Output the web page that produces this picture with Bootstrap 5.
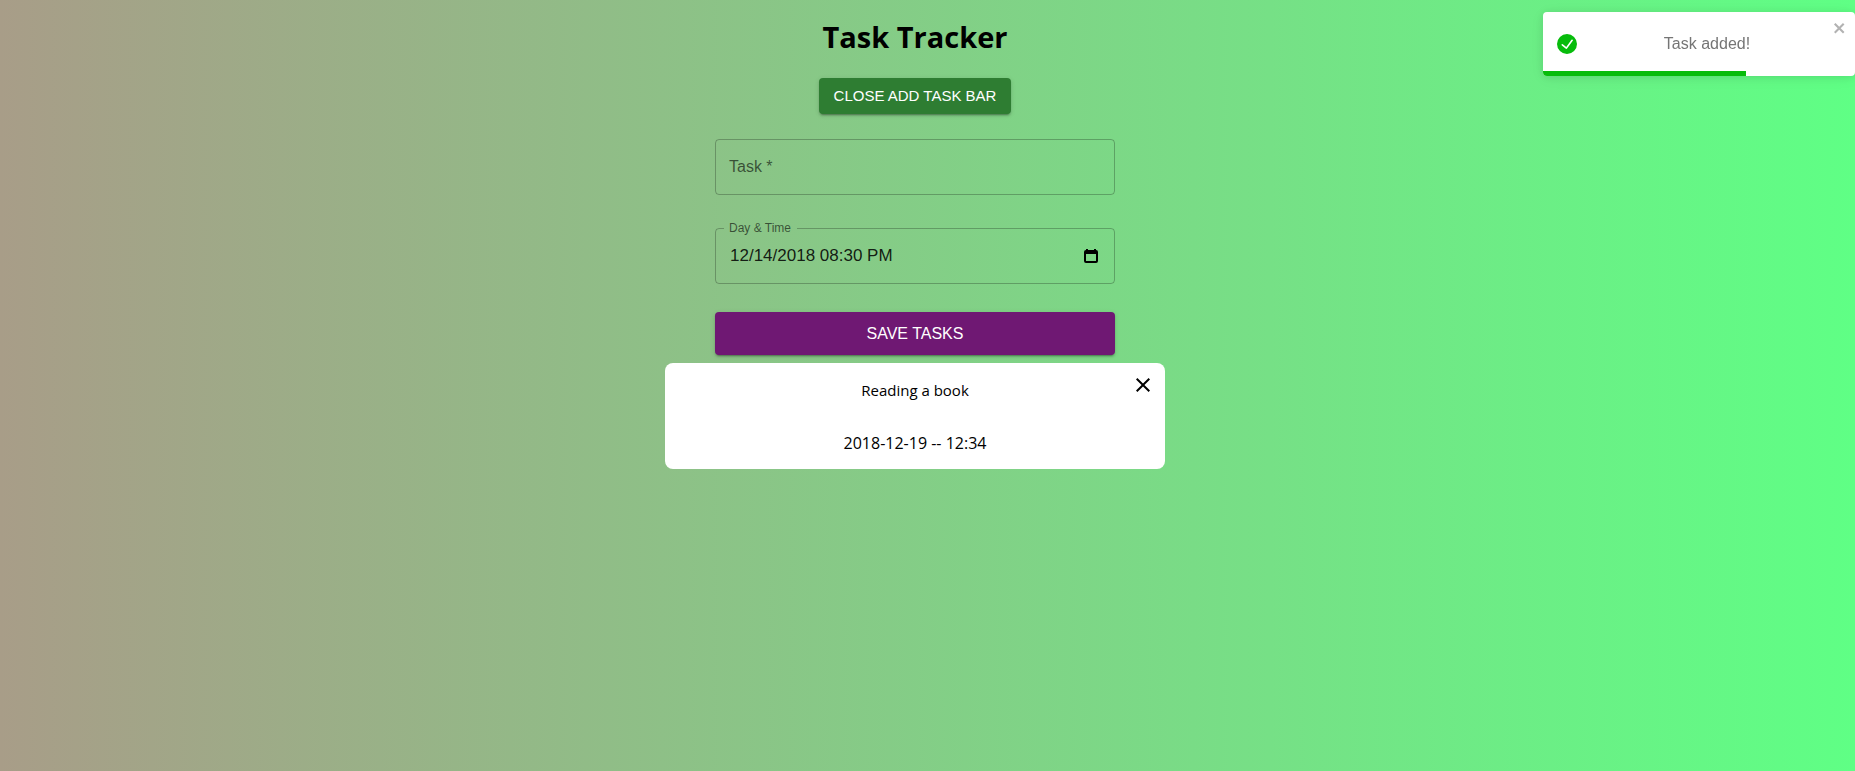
<!DOCTYPE html>
<html lang="en">
<head>
<meta charset="utf-8">
<meta name="viewport" content="width=device-width, initial-scale=1">
<title>Task Tracker</title>
<link href="https://cdn.jsdelivr.net/npm/bootstrap@5.3.0/dist/css/bootstrap.min.css" rel="stylesheet">
<style>
  body {
    min-height: 100vh;
    padding-right: 25px;
    font-family: "Open Sans", "Noto Sans", sans-serif;
    color: #000;
    background: linear-gradient(to right, #a89d88, #5fff85);
  }
  .tracker { max-width: 500px; }
  .tracker-title { font-size: 29px; line-height: 42px; margin: 16px 0 20px; }
  .task-form { max-width: 400px; margin-top: 25px; }

  /* raised, upper-case buttons */
  .btn-raised {
    --bs-btn-color: #fff;
    --bs-btn-hover-color: #fff;
    --bs-btn-active-color: #fff;
    font-family: "Liberation Sans", Arial, sans-serif;
    border: 0;
    border-radius: 4px;
    text-transform: uppercase;
    box-shadow: 0 3px 1px -2px rgba(0,0,0,.2), 0 2px 2px 0 rgba(0,0,0,.14), 0 1px 5px 0 rgba(0,0,0,.12);
  }
  .btn-toggle-form {
    --bs-btn-bg: #2e7d32;
    --bs-btn-hover-bg: #1b5e20;
    --bs-btn-active-bg: #1b5e20;
    height: 36px;
    padding: 0 15px;
    font-size: 15px;
  }
  .btn-save {
    --bs-btn-bg: #6f1873;
    --bs-btn-hover-bg: #581060;
    --bs-btn-active-bg: #581060;
    height: 43px;
    font-size: 16px;
    margin-top: 28px;
  }

  /* outlined fields */
  .field, .toast-note { font-family: "Liberation Sans", Arial, sans-serif; }
  .field-outline { border: 1px solid rgba(0,0,0,.25); border-radius: 4px; }
  .field-input {
    height: 54px;
    padding: 0 14px;
    border: 0;
    border-radius: 4px;
    font-size: 16px;
    line-height: 24px;
    color: rgba(0,0,0,.87);
  }
  .field-input, .field-input:focus { background: transparent; }
  .field-label { color: rgba(0,0,0,.6); line-height: 54px; padding: 0 13px; pointer-events: none; }
  .field-input:focus + .field-label, .field-input:valid + .field-label { display: none; }
  .field-notched { margin-top: 27px; }
  .field-row { height: 49px; padding: 0 15px 5px 14px; }
  .field-row .field-input { height: 24px; padding: 0; font-size: 17px; min-width: 0; }
  .field-notched legend {
    float: none;
    width: auto;
    margin: 0 0 0 8px;
    padding: 0 6px 0 5px;
    font-size: 12px;
    line-height: 12px;
    color: rgba(0,0,0,.6);
  }

  .task-item { min-height: 106px; margin-top: 8px; border-radius: 8px; padding: 15px 0 14px; }
  .task-item p { line-height: 24px; }
  .task-name { font-size: 15px; }
  .icon-button { line-height: 0; background: none; border: 0; padding: 0; color: #000; }
  .task-item .icon-button { top: 10px; right: 10px; }

  .toast-note {
    top: 12px;
    width: 312px;
    height: 64px;
    padding: 0 14px;
    border-radius: 4px;
    color: #757575;
    box-shadow: 0 1px 10px 0 rgba(0,0,0,.1), 0 2px 15px 0 rgba(0,0,0,.05);
  }
  .toast-note .icon-button { top: 8px; right: 8px; color: #b2b2b2; }
  .toast-text { padding: 0 12px 0 8px; }
  .toast-bar { height: 5px; background: #07bc0c; }
</style>
</head>
<body>
<main class="tracker mx-auto text-center d-flex flex-column">
  <h1 class="tracker-title fw-bold">Task Tracker</h1>
  <button type="button" class="btn btn-raised btn-toggle-form align-self-center">Close Add Task Bar</button>

  <form class="task-form w-100 mx-auto text-start">
    <div class="field field-outline position-relative">
      <input id="task" class="field-input d-block w-100" type="text" required>
      <label for="task" class="field-label position-absolute top-0 start-0">Task *</label>
    </div>
    <fieldset class="field field-outline field-notched">
      <legend><label class="d-block" for="when">Day &amp; Time</label></legend>
      <div class="field-row d-flex align-items-center">
        <input id="when" class="field-input flex-grow-1" type="text" value="12/14/2018 08:30 PM">
        <button type="button" class="icon-button" aria-label="Show date picker">
          <svg width="16" height="16" viewBox="0 0 16 16" fill="currentColor"><path fill-rule="evenodd" d="M3 1h2v1h6V1h2v1q2 0 2 2v9q0 2-2 2H3q-2 0-2-2V4q0-2 2-2zM3 6v7h10V6z"/></svg>
        </button>
      </div>
    </fieldset>
    <button type="submit" class="btn btn-raised btn-save w-100">Save Tasks</button>
  </form>

  <article class="task-item bg-white position-relative d-flex flex-column justify-content-between">
    <p class="task-name mb-0">Reading a book</p>
    <p class="mb-0">2018-12-19 -- 12:34</p>
    <button type="button" class="icon-button position-absolute" aria-label="Delete task">
      <svg width="24" height="24" viewBox="0 0 24 24" fill="currentColor"><path d="M19 6.41 17.59 5 12 10.59 6.41 5 5 6.41 10.59 12 5 17.59 6.41 19 12 13.41 17.59 19 19 17.59 13.41 12z"/></svg>
    </button>
  </article>
</main>

<div class="toast-note position-fixed end-0 bg-white d-flex align-items-center overflow-hidden" role="alert">
  <svg width="20" height="20" viewBox="0 0 24 24" fill="#07bc0c"><path d="M12 0a12 12 0 1012 12A12.014 12.014 0 0012 0zm6.927 8.2l-6.845 9.289a1.011 1.011 0 01-1.43.188l-4.888-3.908a1 1 0 111.25-1.562l4.076 3.261 6.227-8.451a1 1 0 111.61 1.183z"/></svg>
  <span class="toast-text flex-grow-1 text-center">Task added!</span>
  <button type="button" class="icon-button position-absolute" aria-label="Close">
    <svg width="14" height="16" viewBox="0 0 14 16" fill="currentColor"><path fill-rule="evenodd" d="M7.71 8.23l3.75 3.75-1.48 1.48-3.75-3.75-3.75 3.75L1 11.98l3.75-3.75L1 4.48 2.48 3l3.75 3.75L9.98 3l1.48 1.48-3.75 3.75z"/></svg>
  </button>
  <div class="toast-bar position-absolute bottom-0 start-0" style="width:65%"></div>
</div>
<script src="https://cdn.jsdelivr.net/npm/bootstrap@5.3.0/dist/js/bootstrap.bundle.min.js"></script>
</body>
</html>
